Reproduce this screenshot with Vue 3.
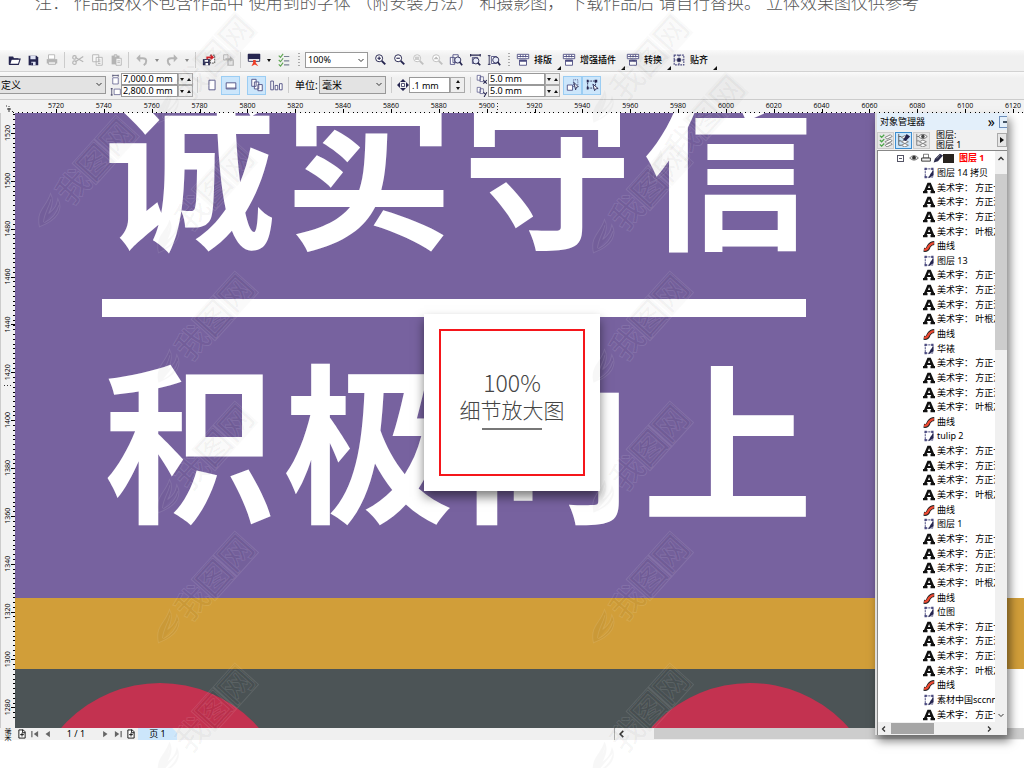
<script setup>
import { ref } from 'vue'

const navy = '#25254f'
const grey = '#b4b4b4'
const lens = (c, inner) =>
  `<circle cx="7" cy="6" r="4" fill="#fff" stroke="${c}" stroke-width="1.1"/><path d="M10 9l4 4" stroke="${c}" stroke-width="2.2"/>${inner}`
const plug = `<path d="M1.500 1.500h13v5h-13zM4 8h8v6H4z" fill="#fff" stroke="#4b4b80"/><path d="M2 4h12M5 2v3M8 2v3M11 2v3" stroke="#4b4b80" fill="none"/><path d="M4 9h8" stroke="#4b4b80" stroke-width="2"/>`

const icons = {
  open: `<path d="M2 4h5l1 2h5v2H5l-2 5H2z" fill="${navy}"/><path d="M5 7h10l-2 6H3z" fill="#fff" stroke="${navy}" stroke-width="1.200"/>`,
  save: `<path d="M3 3h9l2 2v9H3z" fill="${navy}"/><path d="M5 3h6v4H5zM6 10h5v4H6z" fill="#dfe3f4"/><path d="M6 11h2v3H6z" fill="${navy}"/>`,
  print: `<path d="M4 2h7v5H4z" fill="#fff" stroke="${grey}"/><path d="M2 7h12v5H2z" fill="${grey}"/><path d="M4 10h8v3H4z" fill="#eee" stroke="${grey}"/>`,
  cut: `<g stroke="${grey}" stroke-width="1.300" fill="none"><path d="M14 4L5 10M14 10L5 5"/><circle cx="4" cy="5" r="2"/><circle cx="4" cy="11" r="2"/></g>`,
  copy: `<g stroke="${grey}" fill="#f8f8f8"><path d="M3 2h7v8H3zM7 5h7v9H7z"/><path d="M9 8h3M9 10h3M9 12h3"/></g>`,
  paste: `<path d="M3 3h9v10H3z" fill="${grey}"/><path d="M6 2h3v3H6z" fill="#ddd" stroke="${grey}"/><path d="M8 6h6v8H8z" fill="#f5f5f5" stroke="${grey}"/><path d="M9.500 9h3M9.500 11h3" stroke="${grey}"/>`,
  undo: `<path d="M4 6h5c5 0 5 5 1 8" fill="none" stroke="${grey}" stroke-width="2.200"/><path d="M6 1.500v9L1.500 6z" fill="${grey}"/>`,
  redo: `<path d="M12 6H7c-5 0-5 5-1 8" fill="none" stroke="${grey}" stroke-width="2.200"/><path d="M10 1.500v9L14.500 6z" fill="${grey}"/>`,
  importIcon: `<path d="M1 7h8v7H1z" fill="${navy}"/><path d="M3 8h4v2H3zM4 11.500h3V14H4z" fill="#fff"/><path d="M9.500 2.500h5v9h-5z" fill="#fff" stroke="#333" stroke-dasharray="2 1"/><path d="M5 7V4h5V1l4 4-4 3V6H7v1z" fill="#d9222a"/>`,
  exportIcon: `<path d="M3 2h5v6H3z" fill="#eee" stroke="${grey}"/><path d="M8 8h6v6H8z" fill="#e5e5e5" stroke="${grey}" stroke-width="1.400"/><path d="M5 6h5V3l4 4-4 3V8H5z" fill="${grey}"/>`,
  launch: `<path d="M1.500 1.500h13v8h-13z" fill="#fff" stroke="${navy}"/><path d="M1 1h14v6H1z" fill="${navy}"/><path d="M7 8h3v3l3 4-4-2-4 2 2-4z" fill="#ef3b24"/>`,
  options: `<path d="M2 3l2 2 3-4M2 8l2 2 3-4M2 13l2 2 3-4" fill="none" stroke="#5fa552" stroke-width="1.300"/><path d="M8 4h6M8 9h6M8 13.500h6" stroke="#7a8194" stroke-width="1.300"/>`,
  zoomIn: lens(navy, `<path d="M5 6h4M7 4v4" stroke="${navy}" stroke-width="1.300"/>`),
  zoomOut: lens(navy, `<path d="M5 6h4" stroke="${navy}" stroke-width="1.300"/>`),
  zoomOne: lens('#c0c0c0', `<path d="M4.500 4h5v4h-5z" fill="#ccc"/>`),
  zoomSel: lens('#c0c0c0', `<path d="M4 7l3-3 3 3z" fill="#bbb"/>`),
  zoomAll: `<path d="M1.500 5h5v8h-5zM4.500 2h6v9h-6z" fill="#fff" stroke="#4b4b80"/><circle cx="10" cy="8" r="3.500" fill="#e8ecfa" stroke="${navy}"/><path d="M12 10l3 4" stroke="${navy}" stroke-width="2"/>`,
  zoomWidth: `<path d="M3 2.500h11M3 1v3M14 1v3" stroke="${navy}" stroke-width="1.300" fill="none"/><path d="M5 5h6v7H5z" fill="#fff" stroke="#4b4b80"/><circle cx="9" cy="9" r="3.500" fill="#e8ecfa" stroke="${navy}"/><path d="M11 11l3 3" stroke="${navy}" stroke-width="2"/>`,
  zoomHeight: `<path d="M2.500 3v10M1 3h3M1 13h3" stroke="${navy}" fill="none"/><path d="M5 4h6v8H5z" fill="#fff" stroke="#4b4b80"/><circle cx="10" cy="8" r="3.500" fill="#e8ecfa" stroke="${navy}"/><path d="M12 10l3 4" stroke="${navy}" stroke-width="2"/>`,
  plug,
  snap: `<path d="M2.500 2.500h11v11h-11zM2 8h12M8 2v12" fill="none" stroke="#4b4b80" stroke-width="1.300" stroke-dasharray="2 1"/><path d="M6 6h4v4H6z" fill="${navy}"/>`,
  portrait: `<path d="M4.500 2.500h7v11h-7z" fill="#fff" stroke="#4b4b80"/>`,
  landscape: `<path d="M2.500 5.500h11v7h-11z" fill="#fff" stroke="#4b4b80"/><path d="M3 11.500h11" stroke="#4b4b80"/>`,
  pages: `<g fill="#fff" stroke="#4b4b80"><path d="M2 1.500h5v8H2zM5 4.500h5v8H5zM9 7.500h5v7H9z"/></g>`,
  bars: `<g fill="#fff" stroke="#4b4b80"><path d="M2 3.500h3v10H2zM7 8.500h3v5H7zM12 6.500h3v7h-3z"/></g>`,
  nudge: `<path d="M6 6h4v4H6z" fill="#fff" stroke="${navy}"/><path d="M8 0l4 4H4zM8 16l4-4H4zM0 8l4-4v8zM16 8l-4-4v8z" fill="${navy}"/>`,
  treat: `<path d="M1.500 8h6v6h-6z" fill="#fff" stroke="#4b4b80"/><path d="M8.500 2h5v8h-5z" fill="none" stroke="#4b4b80" stroke-dasharray="1 1"/><path d="M9 5l5 5-2 .5-1 3z" fill="#fff" stroke="${navy}"/>`,
  marquee: `<path d="M3 3.500h9v8H3z" fill="none" stroke="${navy}" stroke-dasharray="2 1"/><path d="M2 2h2v3H2zM11 2h3v3h-3zM2 10h2v3H2z" fill="${navy}"/><path d="M9 7l6 5-3 .5-1 2z" fill="#fff" stroke="${navy}"/>`,
  width: `<path d="M4 5.500h8v9H4z" fill="#fff" stroke="#4b4b80"/><path d="M4 2h8M4 1v3M12 1v3" stroke="${navy}" fill="none"/>`,
  height: `<path d="M6 4.500h9v8H6z" fill="#fff" stroke="#4b4b80"/><path d="M2.500 3v11M1 4h3M1 13h3" stroke="${navy}" fill="none"/>`,
  dupX: `<g fill="#fff" stroke="#4b4b80"><path d="M1 2h5v7H1zM5 4h5v7H5z"/></g><path d="M10 9l5 5M15 9l-5 5" stroke="${navy}" stroke-width="1.500"/>`,
  dupY: `<g fill="#fff" stroke="#4b4b80"><path d="M1 2h5v7H1zM5 4h5v7H5z"/></g><path d="M10 9l3 3M15 9l-4 7" stroke="${navy}" stroke-width="1.500"/>`,
  layers: `<path d="M1 3l2 2 3-3M1 8l2 2 3-3M1 13l2 2 3-3" fill="none" stroke="#4da64a" stroke-width="1.500"/><path d="M7 5l6-3 2 2-6 3zM7 10l6-3 2 2-6 3zM7 14l6-3 2 2-6 3z" fill="#fff" stroke="#777" />`,
  editLayers: `<path d="M2 1v13M2 4h3M2 9h3M2 14h3" stroke="#555" fill="none"/><path d="M5 5l4-2 4 2-4 2zM5 10l4-2 4 2-4 2zM5 14l4-2 4 2-4 2z" fill="#fff" stroke="#777"/><path d="M7 8l4-7 4 3-5 5z" fill="${navy}"/>`,
  viewLayers: `<path d="M2 1v13M2 4h3M2 9h3M2 14h3" stroke="#777" fill="none"/><path d="M5 10l4-2 4 2-4 2zM5 14l4-2 4 2-4 2z" fill="#fff" stroke="#777"/><path d="M4 4q5-5 10 0q-5 5-10 0z" fill="#fff" stroke="#666"/><circle cx="9" cy="4" r="2" fill="#444"/>`,
  text: `<path d="M6 1h4.300L15 12h1v3h-6v-3h1l-.6-1.500H5.600L5 12h1v3H0v-3h1.300zM6.600 8h3L8.100 4z" fill="#111"/>`,
  curve: `<path d="M1 13c6 1 5-2 7-5s3-4 7-4" fill="none" stroke="#222" stroke-width="5.400"/><path d="M1.500 13c6 0 4-2 6.500-5s3-4 6.500-4" fill="none" stroke="#f04a32" stroke-width="3"/>`,
  bitmap: `<path d="M3 2.500h10v11H3z" fill="#fff" stroke="#4b4b80" stroke-width="1.300" stroke-dasharray="3 1"/><path d="M14 4v7l-5 3-2 1 3-6z" fill="${navy}"/><path d="M2 1h3v3H2zM2 12h3v3H2zM11 1h3v3h-3z" fill="#4b4b80"/>`,
  eye: `<path d="M1 8q7-8 14 0q-7 7-14 0z" fill="#ddd" stroke="#444"/><circle cx="8" cy="7.500" r="3" fill="#333"/>`,
  printer: `<path d="M4 2h8v6H4z" fill="#fff" stroke="#333"/><path d="M1 8h14v5H1z" fill="#eee" stroke="#333" stroke-width="1.500"/>`,
  pencil: `<path d="M1 15l2-6 8-8 5 3-8 9z" fill="#2b2b4a"/><path d="M6 9l5-6" stroke="#aaa"/>`,
  pageAdd: `<path d="M3 1.500h7l3 3v10H3z" fill="#fff" stroke="#111" stroke-width="1.500"/><path d="M9 1v5h4M5 9h6M8 6v6" stroke="#111" stroke-width="1.500" fill="none"/>`,
  first: `<path d="M3 3v10" stroke="#666" stroke-width="2"/><path d="M13 3v10L6 8z" fill="#666"/>`,
  prev: `<path d="M11 3v10L4 8z" fill="#666"/>`,
  next: `<path d="M5 3v10l7-5z" fill="#666"/>`,
  last: `<path d="M13 3v10" stroke="#666" stroke-width="2"/><path d="M3 3v10l7-5z" fill="#666"/>`,
  left: `<path d="M10 3L5 8l5 5" fill="none" stroke="#333" stroke-width="2.500"/>`,
  right: `<path d="M6 3l5 5-5 5" fill="none" stroke="#333" stroke-width="2.500"/>`,
  up: `<path d="M3 10l5-5 5 5" fill="none" stroke="#333" stroke-width="2.500"/>`,
  down: `<path d="M3 6l5 5 5-5" fill="none" stroke="#333" stroke-width="2"/>`
}

const notice = ['注：', '作品授权不包含作品中', '使用到的字体', '（附安装方法）', '和摄影图，', '下载作品后', '请自行替换。', '立体效果图仅供参考']

const mainTools = [
  ['open', '打开'], ['save', '保存'], ['print', '打印'], ['sep'],
  ['cut', '剪切'], ['copy', '复制'], ['paste', '粘贴'], ['sep'],
  ['undo', '撤消'], ['drop', '撤消列表', 'dim'], ['redo', '重做'], ['drop', '重做列表', 'dim'], ['sep'],
  ['importIcon', '导入'], ['exportIcon', '导出'], ['sep'],
  ['launch', '应用程序启动器'], ['drop', '启动器列表'], ['options', '选项'], ['dots']
]
const zoomTools = [
  ['zoomIn', '放大'], ['zoomOut', '缩小'], ['zoomOne', '单击缩放'], ['zoomSel', '缩放选定'],
  ['zoomAll', '缩放全部'], ['zoomWidth', '按页宽'], ['zoomHeight', '按页高']
]
const plugins = [['plug', '排版'], ['plug', '增强插件'], ['plug', '转换'], ['snap', '贴齐']]

const pageWidth = ref('7,000.0 mm')
const pageHeight = ref('2,800.0 mm')
const nudge = ref('.1 mm')
const dupX = ref('5.0 mm')
const dupY = ref('5.0 mm')

const STEP = 47.85
const hMajor = Array.from({ length: 21 }, (_, i) => ({ v: 5720 + i * 20, p: 56 + i * STEP }))
const hMinor = Array.from({ length: 212 }, (_, i) => 8 + (i + 1) * STEP / 10)
const vMajor = Array.from({ length: 13 }, (_, i) => ({ v: 1520 - i * 20, p: 20 + i * STEP }))
const vMinor = Array.from({ length: 127 }, (_, i) => 1 + i * STEP / 10)

const heads = ['图层 14 拷贝', '图层 13', '华裱', 'tulip 2', '图层 1', '位图']
const rows = [
  ...heads.flatMap(h => [
    { icon: 'bitmap', name: h },
    { icon: 'text', name: '美术字： 方正卡通简体' },
    { icon: 'text', name: '美术字： 方正活意简体' },
    { icon: 'text', name: '美术字： 方正活意简体' },
    { icon: 'text', name: '美术字： 叶根友毛笔' },
    { icon: 'curve', name: '曲线' }
  ]),
  { icon: 'bitmap', name: '素材中国sccnn' },
  { icon: 'text', name: '美术字： 方正卡通简体' }
]

const marks = [
  [169, 108], [169, 238], [169, 368], [169, 498], [169, 628], [169, 760],
  [604, 108], [604, 238], [604, 368], [604, 498], [604, 628], [604, 760],
  [50, 212], [660, 168]
]
</script>

<template>
  <main class="page">
    <p class="notice"><span v-for="t in notice" :key="t">{{ t }}</span></p>

    <div class="bar standard">
      <template v-for="(t, i) in mainTools" :key="i">
        <i v-if="t[0] === 'sep'" class="sep"></i>
        <i v-else-if="t[0] === 'dots'" class="dots"></i>
        <button v-else-if="t[0] === 'drop'" class="drop" :class="t[2]" :aria-label="t[1]"></button>
        <button v-else class="tool" :aria-label="t[1]"><svg viewBox="0 0 16 16" v-html="icons[t[0]]"></svg></button>
      </template>
      <span class="pick zoom">
        <select aria-label="缩放级别"><option>100%</option></select>
        <svg viewBox="0 0 16 16" v-html="icons.down"></svg>
      </span>
      <button v-for="t in zoomTools" :key="t[0]" class="tool" :aria-label="t[1]"><svg viewBox="0 0 16 16" v-html="icons[t[0]]"></svg></button>
      <i class="dots"></i>
      <button v-for="p in plugins" :key="p[1]" class="plugin"><svg viewBox="0 0 16 16" v-html="icons[p[0]]"></svg>{{ p[1] }}</button>
    </div>

    <div class="bar property">
      <span class="pick paper">
        <select aria-label="页面大小"><option>自定义</option></select>
        <svg viewBox="0 0 16 16" v-html="icons.down"></svg>
      </span>
      <div class="pair">
        <label><svg viewBox="0 0 16 16" v-html="icons.width"></svg><input v-model="pageWidth" aria-label="页面宽度"><i class="spin"></i></label>
        <label><svg viewBox="0 0 16 16" v-html="icons.height"></svg><input v-model="pageHeight" aria-label="页面高度"><i class="spin"></i></label>
      </div>
      <i class="sep mid"></i>
      <button class="tool" aria-label="纵向"><svg viewBox="0 0 16 16" v-html="icons.portrait"></svg></button>
      <button class="tool on" aria-label="横向"><svg viewBox="0 0 16 16" v-html="icons.landscape"></svg></button>
      <i class="gap"></i>
      <button class="tool on" aria-label="所有页面"><svg viewBox="0 0 16 16" v-html="icons.pages"></svg></button>
      <button class="tool" aria-label="当前页面"><svg viewBox="0 0 16 16" v-html="icons.bars"></svg></button>
      <i class="sep"></i>
      <label class="unit" for="unit">单位:</label>
      <span class="pick units">
        <select id="unit"><option>毫米</option></select>
        <svg viewBox="0 0 16 16" v-html="icons.down"></svg>
      </span>
      <i class="sep wide"></i>
      <label class="single"><svg viewBox="0 0 16 16" v-html="icons.nudge"></svg><input v-model="nudge" aria-label="微调距离"><i class="spin tall"></i></label>
      <i class="sep wide"></i>
      <div class="pair dup">
        <label><svg viewBox="0 0 16 16" v-html="icons.dupX"></svg><input v-model="dupX" aria-label="再制水平距离"><i class="spin"></i></label>
        <label><svg viewBox="0 0 16 16" v-html="icons.dupY"></svg><input v-model="dupY" aria-label="再制垂直距离"><i class="spin"></i></label>
      </div>
      <button class="tool on" aria-label="视为填充"><svg viewBox="0 0 16 16" v-html="icons.treat"></svg></button>
      <button class="tool on" aria-label="选取框"><svg viewBox="0 0 16 16" v-html="icons.marquee"></svg></button>
    </div>

    <svg class="hruler">
      <path d="M6 6h1M9 6v1M7 9h4M9 8v4M12 11l2 2" stroke="#333" fill="none" />
      <rect v-for="m in hMinor" :key="m" :x="Math.round(m)" y="12" width="1" height="2" />
      <g v-for="m in hMajor" :key="m.v">
        <rect :x="Math.round(m.p)" y="9" width="1" height="5" />
        <text :x="m.p" y="8" text-anchor="middle">{{ m.v }}</text>
      </g>
      <path d="M497.500 3v11" stroke="#333" stroke-dasharray="1 2" />
    </svg>

    <section class="workspace">
      <svg class="vruler">
        <rect v-for="m in vMinor" :key="m" x="12" :y="Math.round(m)" width="2" height="1" />
        <g v-for="m in vMajor" :key="m.v">
          <rect x="10" :y="Math.round(m.p)" width="4" height="1" />
          <text :transform="`translate(9 ${m.p}) rotate(-90)`" text-anchor="middle">{{ m.v }}</text>
        </g>
        <path d="M3 272.500h8" stroke="#333" stroke-dasharray="1 2" />
      </svg>
      <svg class="canvas">
        <rect width="980" height="486" fill="#77629f" />
        <rect y="485" width="100%" height="71" fill="#d19e39" />
        <rect y="556" width="980" height="60" fill="#4c5456" />
        <circle cx="145" cy="701" r="131" fill="#c33250" />
        <circle cx="735" cy="701" r="131" fill="#c33250" />
        <text class="slogan" x="89 268 447 627" y="123">诚实守信</text>
        <rect x="87" y="186" width="704" height="18" fill="#fff" />
        <text class="slogan" x="89 268 447 627" y="396">积极向上</text>
      </svg>
      <div class="card">
        <div class="frame">
          <span class="percent">100%</span>
          <span class="caption">细节放大图</span>
          <i class="line"></i>
        </div>
      </div>
    </section>

    <footer class="status">
      <span class="mini">毫米</span>
      <button aria-label="添加页面"><svg viewBox="0 0 16 16" v-html="icons.pageAdd"></svg></button>
      <button aria-label="第一页"><svg viewBox="0 0 16 16" v-html="icons.first"></svg></button>
      <button aria-label="上一页"><svg viewBox="0 0 16 16" v-html="icons.prev"></svg></button>
      <span class="count">1 / 1</span>
      <button aria-label="下一页"><svg viewBox="0 0 16 16" v-html="icons.next"></svg></button>
      <button aria-label="最后一页"><svg viewBox="0 0 16 16" v-html="icons.last"></svg></button>
      <button aria-label="添加页面"><svg viewBox="0 0 16 16" v-html="icons.pageAdd"></svg></button>
      <button class="tab">页 1</button>
      <div class="hscroll">
        <button aria-label="向左滚动"><svg viewBox="0 0 16 16" v-html="icons.left"></svg></button>
        <i class="thumb"></i>
      </div>
    </footer>

    <svg class="watermark" aria-hidden="true">
      <g v-for="(m, i) in marks" :key="i" :transform="`translate(${m[0]} ${m[1]}) rotate(-48)`">
        <path d="M-18 2C-8-12 2-6 14-12C12-5 6-2-2 0C6 2 10 0 15-3C11 8 0 11-18 2zM-12 2C-4-4 4-4 10-8M-12 3C-4 6 4 6 11 2" />
        <text x="18" y="12">我图网</text>
        <rect x="51" y="-16" width="32" height="32" />
        <rect x="84" y="-16" width="32" height="32" />
      </g>
    </svg>

    <aside class="docker">
      <header><h2>对象管理器</h2><span class="more">»</span><i class="pin"></i></header>
      <div class="modes">
        <button aria-label="显示对象属性"><svg viewBox="0 0 16 16" v-html="icons.layers"></svg></button>
        <button class="on" aria-label="跨图层编辑"><svg viewBox="0 0 16 16" v-html="icons.editLayers"></svg></button>
        <button aria-label="图层管理器视图"><svg viewBox="0 0 16 16" v-html="icons.viewLayers"></svg></button>
        <p>图层:<br>图层 1</p>
        <button class="fly" aria-label="选项"></button>
      </div>
      <div class="tree">
        <ul>
          <li class="layer">
            <i class="box"></i>
            <svg viewBox="0 0 16 16" v-html="icons.eye"></svg>
            <svg viewBox="0 0 16 16" v-html="icons.printer"></svg>
            <svg viewBox="0 0 16 16" v-html="icons.pencil"></svg>
            <i class="swatch"></i><b>图层 1</b>
          </li>
          <li v-for="(r, i) in rows" :key="i"><svg viewBox="0 0 16 16" v-html="icons[r.icon]"></svg>{{ r.name }}</li>
        </ul>
        <div class="vscroll">
          <svg viewBox="0 0 16 16" v-html="icons.up"></svg><i></i><svg viewBox="0 0 16 16" v-html="icons.down"></svg>
        </div>
      </div>
      <div class="foot">
        <svg viewBox="0 0 16 16" v-html="icons.left"></svg><i></i><svg viewBox="0 0 16 16" v-html="icons.right"></svg>
      </div>
    </aside>
  </main>
</template>

<style>
body { margin: 0; background: #fff; overflow: hidden; }
</style>

<style scoped>
* { box-sizing: border-box; }
.page {
  position: relative;
  overflow: hidden;
  min-height: 100vh;
  color: #000;
  font: 9px/12px "Noto Sans", "Noto Sans CJK SC", sans-serif;
}
button, input, select { font: inherit; color: inherit; border: 0; padding: 0; margin: 0; background: none; border-radius: 0; }
button { display: flex; align-items: center; justify-content: center; }
svg { flex: none; }
.notice {
  display: flex;
  justify-content: space-between;
  width: 884px;
  max-width: 100%;
  height: 60px;
  margin: -10px 0 0 35px;
  font: 300 17px/24px "Noto Sans CJK SC", sans-serif;
  color: #555;
  white-space: nowrap;
}
.bar { display: flex; align-items: center; }
.standard { height: 22px; padding: 0 0 1px 4px; border-bottom: 1px solid #d2d2d2; background: linear-gradient(#fafafa, #f0f0f0 6px); }
.property { height: 27px; padding-bottom: 1px; background: linear-gradient(#fafafa, #f0f0f0 6px); }
.tool { width: 19px; height: 19px; flex: none; }
.tool svg { width: 14px; height: 14px; }
.tool.on { background: #cce6fb; border: 1px solid #9bcdf3; }
.sep { width: 7px; height: 16px; flex: none; background: linear-gradient(#ccc, #ccc) center / 1px 100% no-repeat; }
.sep.mid { width: 9px; }
.sep.wide { width: 11px; }
.gap { width: 7px; }
.dots { width: 12px; height: 14px; flex: none; background: repeating-linear-gradient(#aaa 0 1px, transparent 1px 3px) center / 2px 100% no-repeat; }
.drop { width: 11px; height: 19px; flex: none; }
.drop::before { content: ""; border: 2px solid transparent; border-top: 3px solid #111; border-bottom: 0; }
.drop.dim::before { border-top-color: #888; }
.pick { position: relative; flex: none; background: #fff; }
.pick select { width: 100%; height: 100%; padding-left: 2px; appearance: none; border: 1px solid #999; }
.pick svg { position: absolute; right: 3px; top: 4px; width: 8px; height: 8px; pointer-events: none; }
.zoom { width: 63px; height: 16px; margin-right: 2px; }
.plugin { position: relative; height: 20px; padding-right: 9px; gap: 3px; flex: none; font-weight: 500; white-space: nowrap; }
.plugin svg { width: 16px; height: 14px; }
.plugin::after { content: ""; position: absolute; right: 0; bottom: 0; border: 2px solid transparent; border-right-color: #111; border-bottom-color: #111; }
.paper { width: 118px; height: 18px; margin-left: -12px; }
.paper select { background: #e3e3e3; font-size: 10px; }
.units { width: 67px; height: 18px; }
.units select { background: #e3e3e3; font-size: 10px; }
.unit { width: 27px; padding-left: 3px; font-size: 10px; white-space: nowrap; }
.pair { display: flex; flex-direction: column; margin-left: 4px; }
.pair.dup { margin: 0 3px 0 0; }
.pair label, .single { display: flex; align-items: center; }
.pair svg { width: 11px; height: 11px; }
.pair input { width: 57px; height: 12px; padding-left: 1px; background: #fff; border: 1px solid #999; }
.single svg { width: 12px; height: 12px; }
.single input { width: 41px; height: 16px; padding-left: 2px; background: #fff; border: 1px solid #999; }
.pair.dup svg { width: 12px; }
.spin { display: flex; align-items: center; justify-content: space-around; width: 15px; height: 12px; border: 1px solid #aaa; background: #eee; }
.spin::before { content: ""; border: 2px solid transparent; border-top: 3px solid #111; border-bottom: 0; }
.spin::after { content: ""; border: 2px solid transparent; border-bottom: 3px solid #111; border-top: 0; }
.spin.tall { height: 16px; flex-direction: column-reverse; }
.hruler { display: block; width: 100%; height: 14px; background: #f2f2f2; border-top: 1px solid #ccc; fill: #000; font: 7px "Open Sans", sans-serif; }
.workspace { position: relative; display: flex; height: 615px; }
.vruler { width: 15px; height: 100%; background: #f2f2f2; fill: #000; font: 7px "Open Sans", sans-serif; border-left: 1px solid #ccc; }
.canvas { flex: 1; min-width: 0; height: 100%; }
.slogan { font: 700 171px "Noto Sans CJK SC", sans-serif; fill: #fff; }
.card { position: absolute; left: 50%; top: 201px; margin-left: -88px; width: 176px; padding: 15px; background: #fff; box-shadow: 0 6px 10px rgba(0, 0, 0, .5); }
.frame { display: flex; flex-direction: column; align-items: center; height: 147px; padding-top: 38px; border: 2px solid #f5161b; color: #444; font-family: "Noto Sans CJK SC", sans-serif; font-weight: 300; }
.percent { font-size: 23px; line-height: 27px; }
.caption { font-size: 21px; line-height: 26px; }
.line { width: 60px; height: 2px; margin-top: 6px; background: #777; }
.status { display: flex; align-items: center; height: 12px; background: #f0f0f0; }
.status svg { width: 10px; height: 10px; }
.status button { width: 13px; height: 12px; flex: none; }
.mini { width: 15px; font-size: 7px; writing-mode: vertical-rl; text-align: center; line-height: 15px; height: 14px; flex: none; }
.count { width: 44px; text-align: center; }
.status .tab { width: 39px; margin-left: 1px; background: #cce6fb; clip-path: polygon(0 0, 88% 0, 100% 40%, 100% 100%, 0 100%); }
.hscroll { display: flex; width: 40%; margin-left: auto; border-left: 1px solid #aaa; }
.hscroll .thumb { flex: 1; height: 11px; margin-left: 26px; background: #cdcdcd; }
.watermark { position: absolute; inset: 0; width: 100%; height: 100%; pointer-events: none; fill: rgba(0, 0, 0, .03); stroke: rgba(255, 255, 255, .1); font: 500 33px "Noto Sans CJK SC", sans-serif; }
.watermark rect { fill: rgba(0, 0, 0, .02); }
.docker { position: absolute; top: 113px; right: 17px; width: 132px; height: 622px; display: flex; flex-direction: column; background: #f0f0f0; border-left: 2px solid #ddd; box-shadow: 3px 6px 9px rgba(0, 0, 0, .5); }
.docker header { display: flex; align-items: center; height: 17px; flex: none; padding-left: 3px; background: #e3effa; }
.docker h2 { flex: 1; margin: 0; font-size: 9px; font-weight: 400; }
.more { font-size: 14px; margin-right: 4px; }
.pin { width: 8px; height: 12px; border: 1px solid #6d8ebb; border-right: 0; background: linear-gradient(#456, #456) right center / 4px 2px no-repeat; }
.modes { display: flex; align-items: center; height: 20px; flex: none; gap: 1px; }
.modes button { width: 17px; height: 17px; border: 1px solid #ccc; background: #e6e6e6; }
.modes button.on { border-color: #3d8ed0; background: #cce6fb; }
.modes svg { width: 14px; height: 14px; }
.modes p { flex: 1; margin: 0 0 0 5px; line-height: 10px; }
.modes .fly { width: 10px; height: 14px; border-color: #aaa; }
.fly::before { content: ""; border: 3px solid transparent; border-left: 4px solid #111; border-right: 0; }
.tree { display: flex; flex: 1; min-height: 0; background: #fff; border-top: 1px solid #888; border-left: 1px solid #888; }
.tree ul { display: flex; flex-direction: column; flex: 1; min-width: 0; margin: 0; padding: 0; list-style: none; overflow: hidden; }
.tree li { display: flex; flex: 1; min-height: 0; align-items: center; gap: 2px; padding-left: 45px; white-space: pre; }
.tree li svg { width: 12px; height: 12px; }
.tree li.layer { padding-left: 19px; gap: 2px; color: #f00; }
.tree li.layer svg { width: 10px; height: 10px; }
.box { width: 7px; height: 7px; margin-right: 3px; border: 1px solid #556; background: linear-gradient(#556, #556) center / 3px 1px no-repeat; }
.swatch { width: 11px; height: 9px; margin: 0 3px 0 -2px; background: #28231e; }
.vscroll { display: flex; flex-direction: column; align-items: center; justify-content: space-between; width: 12px; padding: 4px 0 3px; background: #f0f0f0; }
.vscroll svg { width: 8px; height: 8px; }
.vscroll i { width: 100%; height: 176px; margin: 11px 0 auto; background: #cdcdcd; }
.foot { display: flex; align-items: center; height: 13px; flex: none; padding: 0 14px 0 2px; border-left: 1px solid #888; }
.foot svg { width: 8px; height: 8px; }
.foot i { width: 43px; height: 11px; margin: 0 auto 0 3px; background: #a6a6a6; }
</style>
